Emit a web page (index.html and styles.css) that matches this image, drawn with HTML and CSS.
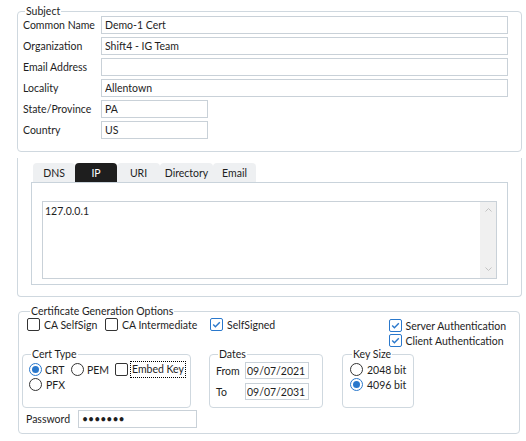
FILE: index.html
```html
<!DOCTYPE html>
<html>
<head>
<meta charset="utf-8">
<link rel="stylesheet" href="styles.css">
</head>
<body>
<div class="page">
  <fieldset class="group subject">
    <legend>Subject</legend>
    <div class="form-grid">
      <label class="lbl">Common Name</label><input class="field wide" type="text" value="Demo-1 Cert">
      <label class="lbl">Organization</label><input class="field wide" type="text" value="Shift4 - IG Team">
      <label class="lbl">Email Address</label><input class="field wide" type="text" value="">
      <label class="lbl">Locality</label><input class="field wide" type="text" value="Allentown">
      <label class="lbl">State/Province</label><input class="field short" type="text" value="PA">
      <label class="lbl">Country</label><input class="field short" type="text" value="US">
    </div>
  </fieldset>

  <div class="san-panel">
    <div class="tabs">
      <div class="tab tab-dns">DNS</div>
      <div class="tab tab-ip active">IP</div>
      <div class="tab tab-uri">URI</div>
      <div class="tab tab-dir">Directory</div>
      <div class="tab tab-email">Email</div>
    </div>
    <div class="tab-body">
      <div class="textbox">
        <div class="textbox-text">127.0.0.1</div>
        <div class="scrollbar">
          <svg class="arrow" width="9" height="6" viewBox="0 0 9 6"><path d="M1.5 4.5 L4.5 1.5 L7.5 4.5" fill="none" stroke="#c3c3c3" stroke-width="1"/></svg>
          <svg class="arrow" width="9" height="6" viewBox="0 0 9 6"><path d="M1.5 1.5 L4.5 4.5 L7.5 1.5" fill="none" stroke="#c3c3c3" stroke-width="1"/></svg>
        </div>
      </div>
    </div>
  </div>

  <fieldset class="group options">
    <legend>Certificate Generation Options</legend>
    <div class="opts-top">
      <div class="opts-checks">
        <div class="check"><span class="cb"></span><span>CA SelfSign</span></div>
        <div class="check"><span class="cb"></span><span>CA Intermediate</span></div>
        <div class="check"><span class="cb on"><svg width="11" height="11" viewBox="0 0 11 11"><path d="M2.2 5.6 L4.4 7.8 L8.8 3.2" fill="none" stroke="#2a78cc" stroke-width="1.4"/></svg></span><span>SelfSigned</span></div>
      </div>
      <div class="opts-auth">
        <div class="check"><span class="cb on"><svg width="11" height="11" viewBox="0 0 11 11"><path d="M2.2 5.6 L4.4 7.8 L8.8 3.2" fill="none" stroke="#2a78cc" stroke-width="1.4"/></svg></span><span>Server Authentication</span></div>
        <div class="check"><span class="cb on"><svg width="11" height="11" viewBox="0 0 11 11"><path d="M2.2 5.6 L4.4 7.8 L8.8 3.2" fill="none" stroke="#2a78cc" stroke-width="1.4"/></svg></span><span>Client Authentication</span></div>
      </div>
    </div>

    <div class="groups">
      <fieldset class="group sub certtype">
        <legend>Cert Type</legend>
        <div class="row">
          <div class="check crt"><span class="rb on"></span><span>CRT</span></div>
          <div class="check pem"><span class="rb"></span><span>PEM</span></div>
          <div class="check embed"><span class="cb"></span><span class="focus">Embed Key</span></div>
        </div>
        <div class="row">
          <div class="check"><span class="rb"></span><span>PFX</span></div>
        </div>
      </fieldset>

      <fieldset class="group sub dates">
        <legend>Dates</legend>
        <div class="date-grid">
          <label class="lbl">From</label><input class="field date" type="text" value="09/07/2021">
          <label class="lbl">To</label><input class="field date" type="text" value="09/07/2031">
        </div>
      </fieldset>

      <fieldset class="group sub keysize">
        <legend>Key Size</legend>
        <div class="row">
          <div class="check"><span class="rb"></span><span>2048 bit</span></div>
        </div>
        <div class="row">
          <div class="check"><span class="rb on"></span><span>4096 bit</span></div>
        </div>
      </fieldset>
    </div>

    <div class="password-row">
      <label class="lbl pw-lbl">Password</label>
      <input class="field pw" type="password" value="1234567">
    </div>
  </fieldset>
</div>
</body>
</html>
```

FILE: styles.css
```css
* {
  box-sizing: border-box;
}

body {
  margin: 0;
  background: #ffffff;
  font-family: Lato, "Open Sans", sans-serif;
  font-size: 10.5px;
  color: #1e1e1e;
}

.page {
  width: 526px;
  padding: 0 4px 0 17px;
}

.group {
  margin: 0;
  min-width: 0;
  border: 1px solid #cfd8df;
  border-radius: 4px;
}

.group > legend {
  line-height: 8px;
  padding: 0 1px;
  margin-left: 2px;
}

/* Subject */
.subject {
  margin-top: 7px;
  padding: 1px 13px 12px 5px;
}

.form-grid {
  display: grid;
  grid-template-columns: 78px 1fr;
  grid-auto-rows: 18px;
  row-gap: 3px;
}

.lbl {
  align-self: center;
  white-space: nowrap;
}

.field {
  font: inherit;
  color: #1e1e1e;
  height: 18px;
  border: 1px solid #c9d1d8;
  border-radius: 0;
  padding: 0 3px;
  margin: 0;
  background: #fff;
  outline: none;
}

.field.wide {
  width: 100%;
}

.field.short {
  width: 107px;
}

/* SAN tabs panel */
.san-panel {
  margin-top: 6px;
  border: 1px solid #cfd8df;
  border-top: none;
  border-radius: 0 0 4px 4px;
  padding: 5px 13px 11px 13px;
}

.tabs {
  display: flex;
  margin-left: 2px;
  height: 19px;
}

.tab {
  display: flex;
  align-items: center;
  justify-content: center;
  background: #eef0f2;
  border-radius: 4px 4px 0 0;
  color: #1e1e1e;
}

.tab.active {
  background: #1e1e1e;
  color: #ffffff;
}

.tab-dns { width: 42px; }
.tab-ip { width: 42px; }
.tab-uri { width: 43px; }
.tab-dir { width: 53px; }
.tab-email { width: 43px; }

.tab-body {
  border: 1px solid #c9d3db;
  padding: 18px 10px 5px 10px;
}

.textbox {
  display: flex;
  height: 78px;
  border: 1px solid #c9d1d8;
}

.textbox-text {
  flex: 1;
  padding: 2px 2px;
  line-height: 14px;
}

.scrollbar {
  width: 16px;
  background: #f0f0f0;
  display: flex;
  flex-direction: column;
  justify-content: space-between;
  align-items: center;
  padding: 5px 0 6px 0;
}

.arrow {
  display: block;
}

/* Options */
.options {
  margin: 10px 2px 0 1px;
  padding: 0 13px 5px 3px;
}

.options > legend {
  margin-left: 8px;
}

.opts-top {
  display: flex;
  justify-content: space-between;
  margin-top: 3px;
}

.opts-checks {
  display: grid;
  grid-template-columns: 78px 105px auto;
  margin-left: 5px;
  margin-top: 0;
  height: 13px;
}

.opts-auth {
  display: flex;
  flex-direction: column;
}

.opts-auth .check {
  height: 15px;
}

.check {
  display: flex;
  align-items: center;
  gap: 4px;
  white-space: nowrap;
  height: 13px;
}

.cb {
  width: 13px;
  height: 13px;
  flex: none;
  border: 1px solid #333333;
  border-radius: 2px;
  background: #fff;
  display: flex;
  align-items: center;
  justify-content: center;
}

.cb.on {
  border-color: #2a78cc;
}

.cb svg {
  display: block;
}

.rb {
  width: 13px;
  height: 13px;
  flex: none;
  border: 1px solid #333333;
  border-radius: 50%;
  background: #fff;
  display: flex;
  align-items: center;
  justify-content: center;
}

.rb.on {
  border-color: #2a78cc;
}

.rb.on::after {
  content: "";
  width: 7px;
  height: 7px;
  border-radius: 50%;
  background: #2a78cc;
}

.groups {
  display: flex;
  margin-top: 2px;
}

.group.sub {
  height: 58px;
}

.certtype {
  width: 169px;
  padding: 5px 4px 0 6px;
}

.dates {
  width: 114px;
  margin-left: 18px;
  padding: 4px 13px 0 6px;
}

.keysize {
  width: 72px;
  margin-left: 19px;
  padding: 5px 0 0 7px;
}

.row {
  display: flex;
  height: 15px;
  align-items: flex-start;
}

.crt { width: 42px; gap: 3px; }
.pem { width: 44px; gap: 3px; }

.embed {
  gap: 2px;
}

.focus {
  border: 1px dotted #000000;
  padding: 1px 1px;
  line-height: 13px;
}

.date-grid {
  display: grid;
  grid-template-columns: 29px 64px;
  grid-auto-rows: 17px;
  row-gap: 4px;
}

.field.date {
  height: 17px;
  width: 64px;
  padding: 0 1px;
}

.password-row {
  display: flex;
  align-items: center;
  margin-top: 2px;
  margin-left: 4px;
}

.pw-lbl {
  width: 52px;
}

.field.pw {
  width: 119px;
  height: 18px;
  letter-spacing: 0;
}
```
